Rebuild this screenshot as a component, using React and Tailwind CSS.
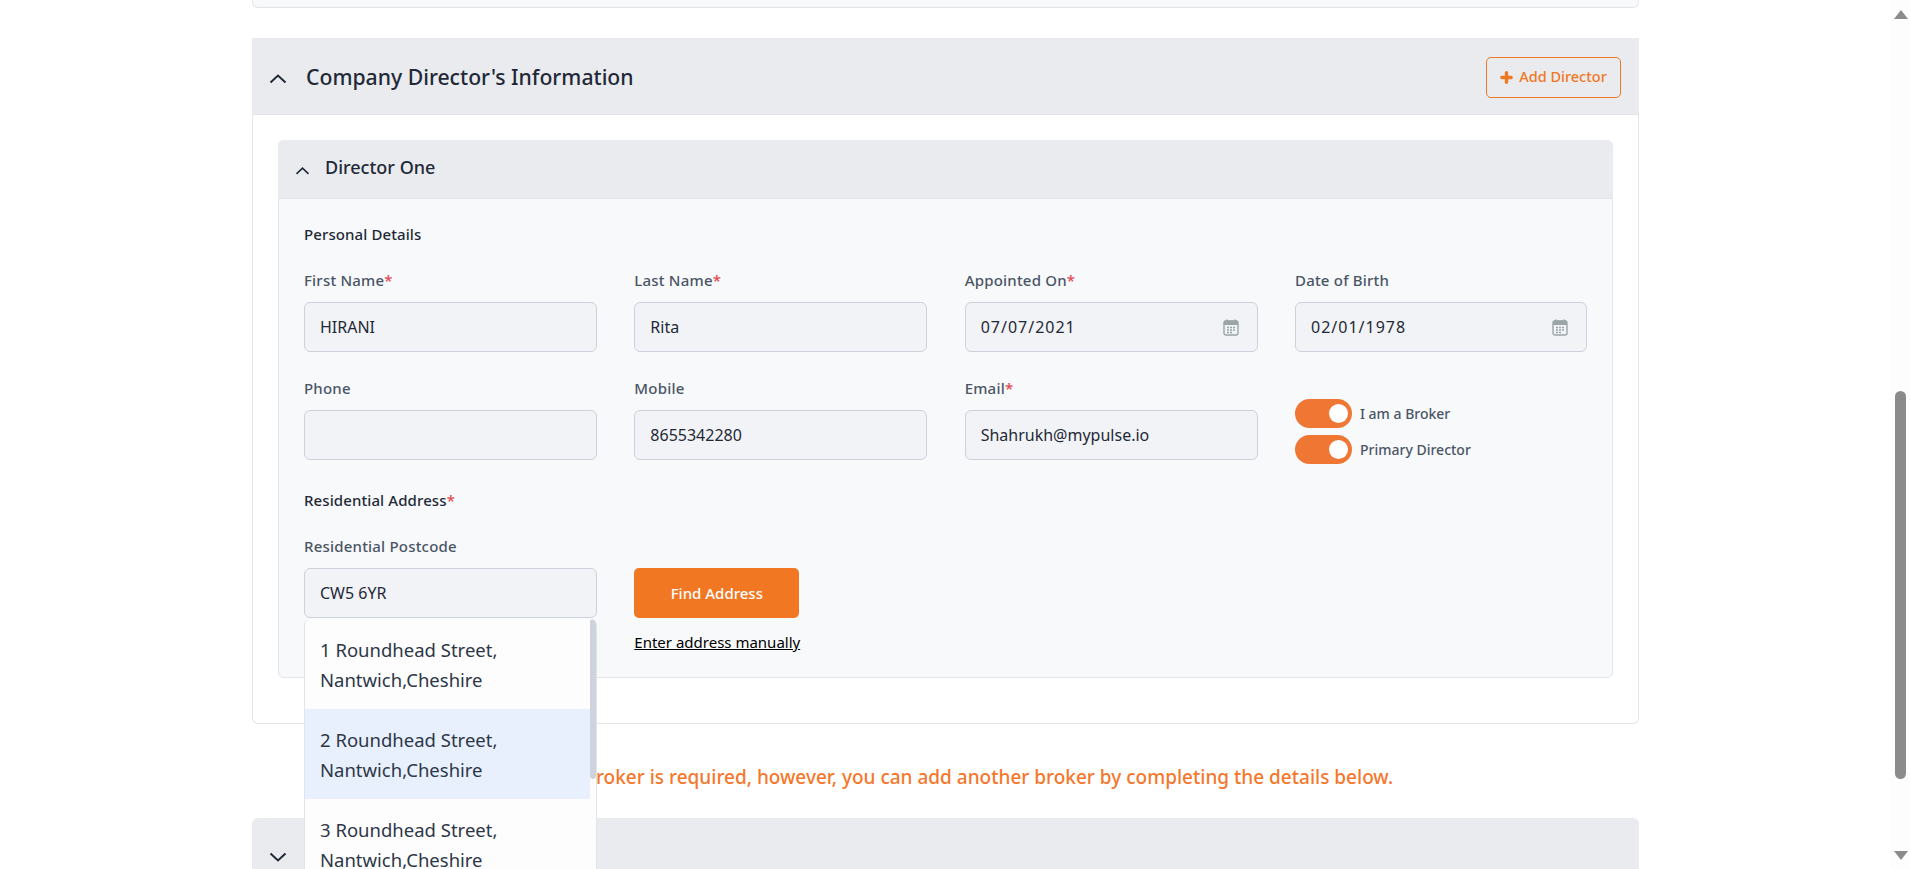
const font = { fontFamily: '"Noto Sans", sans-serif' };

function Chevron({ down, className }) {
  return (
    <svg viewBox="0 0 18 10" fill="none" stroke="#1f2937" strokeWidth="2" className={className}>
      <path d={down ? 'M1.5 1.5 9 8.5l7.5-7' : 'M1.5 8.5 9 1.5l7.5 7'} />
    </svg>
  );
}

function PlusIcon() {
  return (
    <svg viewBox="0 0 13 13" className="w-[13px] h-[13px]" fill="none" stroke="#f07823" strokeWidth="3.4" strokeLinecap="round">
      <path d="M6.5 1.8v9.4M1.8 6.5h9.4" />
    </svg>
  );
}

function CalendarIcon() {
  return (
    <svg viewBox="0 0 16 17" className="w-[16px] h-[17px] ml-auto mr-[18px]" fill="none">
      <path d="M4 .5v3M12 .5v3" stroke="#9aa5a8" strokeWidth="1.4" />
      <rect x="1" y="2" width="14" height="14" rx="2" stroke="#9aa5a8" strokeWidth="1.4" />
      <path d="M1 2.8a1.5 1.5 0 0 1 1.5-1.3h11A1.5 1.5 0 0 1 15 2.8V6H1z" fill="#9aa5a8" />
      <path d="M4 8.5h2M7 8.5h2M10 8.5h2M4 11h2M7 11h2M10 11h2M4 13.5h2M7 13.5h2" stroke="#9aa5a8" strokeWidth="1.3" />
    </svg>
  );
}

function Label({ text, required }) {
  return (
    <div className="text-[15px] tracking-[0.2px] leading-[20px] font-medium text-[#4a5565] mb-[12px]">
      {text}
      {required && <span className="text-[#e5484d]">*</span>}
    </div>
  );
}

function Field({ label, required, value, date }) {
  return (
    <div>
      <Label text={label} required={required} />
      <div className="h-[50px] flex items-center pl-[15px] rounded-[6px] border border-[#ced1db] bg-[#f1f3f6] text-[16px] text-[#1f2937]">
        <span className={date ? 'tracking-[1px]' : ''}>{value}</span>
        {date && <CalendarIcon />}
      </div>
    </div>
  );
}

function Toggle({ label }) {
  return (
    <div className="flex items-center gap-[8px]">
      <div className="w-[57px] h-[29px] rounded-full bg-[#ef7733] flex items-center justify-end pr-[4px]">
        <div className="w-[19px] h-[19px] rounded-full bg-white" />
      </div>
      <span className="text-[14px] font-medium text-[#4a5565]">{label}</span>
    </div>
  );
}

function AddressOption({ number, active }) {
  return (
    <div className={`px-[15px] pt-[16px] pb-[14px] text-[18.5px] leading-[30px] text-[#2d3748] ${active ? 'bg-[#e8f0fe]' : ''}`}>
      {number} Roundhead Street,
      <br />
      Nantwich,Cheshire
    </div>
  );
}

function Scrollbar() {
  return (
    <div className="w-[19px] h-full flex flex-col items-center bg-[#fdfdfd] shrink-0">
      <svg viewBox="0 0 14 9" className="w-[14px] h-[9px] mt-[10px]" fill="#8b8b8b"><path d="M7 0 14 9H0z" /></svg>
      <div className="w-[11px] h-[388px] mt-[372px] rounded-[6px] bg-[#8b8b8b]" />
      <svg viewBox="0 0 14 9" className="w-[14px] h-[9px] mt-[72px]" fill="#8b8b8b"><path d="M0 0h14L7 9z" /></svg>
    </div>
  );
}

export default function App() {
  return (
    <div className="h-screen flex overflow-hidden bg-white" style={font}>
      <main className="flex-1 min-w-0 px-[252px]">
        <div className="h-[8px] rounded-b-[6px] border border-t-0 border-[#e2e4e8] bg-[#f8f9fb]" />

        <section className="mt-[30px] border border-t-0 border-[#e2e4e8] rounded-b-[6px] bg-white">
          <header className="h-[77px] -mx-px flex items-center justify-between pl-[17px] pr-[18px] bg-[#eaebef] border-b border-[#e2e4e8]">
            <div className="flex items-center gap-[19px] pt-[2px]">
              <Chevron className="w-[18px] h-[10px] mt-[4px]" />
              <h2 className="text-[21.2px] font-medium text-[#1f2937]">Company Director's Information</h2>
            </div>
            <button className="w-[135px] h-[41px] mt-[2px] flex items-center justify-center gap-[6px] rounded-[5px] border border-[#f07823] text-[14.5px] font-medium text-[#f07823]">
              <PlusIcon />
              Add Director
            </button>
          </header>

          <div className="pt-[25px] px-[25px] pb-[45px]">
            <div className="rounded-[6px] border border-[#e2e4e8] bg-[#f8f9fb]">
              <div className="h-[59px] -mx-px -mt-px flex items-center gap-[15px] pl-[17px] rounded-t-[6px] bg-[#eaebef] border-b border-[#e2e4e8]">
                <Chevron className="w-[15px] h-[8px] mt-[4px]" />
                <h3 className="text-[18px] font-medium text-[#1f2937] mb-[3px]">Director One</h3>
              </div>

              <div className="pt-[25px] pb-[25px] px-[25px]">
                <div className="text-[15px] tracking-[0.1px] leading-[20px] font-medium text-[#1f2937] mb-[26px]">Personal Details</div>

                <div className="grid grid-cols-[293px_293px_293px_292px] justify-between gap-y-[26px]">
                  <Field label="First Name" required value="HIRANI" />
                  <Field label="Last Name" required value="Rita" />
                  <Field label="Appointed On" required value="07/07/2021" date />
                  <Field label="Date of Birth" value="02/01/1978" date />
                  <Field label="Phone" value="" />
                  <Field label="Mobile" value="8655342280" />
                  <Field label="Email" required value="Shahrukh@mypulse.io" />
                  <div className="h-[82px] flex flex-col gap-[7px] pt-[21px]">
                    <Toggle label="I am a Broker" />
                    <Toggle label="Primary Director" />
                  </div>
                </div>

                <div className="text-[15px] tracking-[0.1px] leading-[20px] font-medium text-[#1f2937] mt-[30px] mb-[26px]">
                  Residential Address<span className="text-[#e5484d]">*</span>
                </div>

                <div className="grid grid-cols-[293px_293px_293px_292px] justify-between">
                  <div className="relative">
                    <Label text="Residential Postcode" />
                    <div className="h-[50px] flex items-center pl-[15px] rounded-[6px] border border-[#ced1db] bg-[#f1f3f6] text-[16px] text-[#1f2937]">
                      CW5 6YR
                    </div>
                    <div className="absolute top-[83px] left-0 right-0 h-[300px] z-10 overflow-hidden rounded-t-[6px] border-x border-[#e2e4e8] bg-[#fdfdfd] pr-[6px]">
                      <AddressOption number="1" />
                      <AddressOption number="2" active />
                      <AddressOption number="3" />
                      <div className="absolute top-0 right-0 w-[6px] h-[160px] rounded-full bg-[#ced3de]" />
                    </div>
                  </div>
                  <div className="pt-[32px]">
                    <button className="w-[165px] h-[50px] rounded-[5px] bg-[#f17722] text-[15px] font-medium text-white">Find Address</button>
                    <div className="mt-[14px] text-[15px] leading-[20px] text-black underline">Enter address manually</div>
                  </div>
                </div>
              </div>
            </div>
          </div>
        </section>

        <p className="mt-[41px] text-center text-[19px] leading-[24px] font-medium text-[#f5772b]">
          Only one broker is required, however, you can add another broker by completing the details below.
        </p>

        <section className="mt-[29px] h-[77px] flex items-center pl-[17px] rounded-t-[6px] bg-[#eaebef]">
          <Chevron down className="w-[18px] h-[10px]" />
        </section>
      </main>
      <Scrollbar />
    </div>
  );
}
